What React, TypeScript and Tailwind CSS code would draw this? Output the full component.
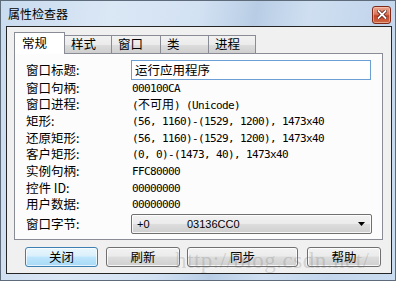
import React from "react";

const rows: { label: string; value: React.ReactNode; h: string }[] = [
  { label: "窗口句柄:", value: "000100CA", h: "h-[16px]" },
  {
    label: "窗口进程:",
    value: (
      <>
        (<span className="font-['Noto_Sans_CJK_SC',sans-serif] text-[12px] tracking-normal">不可用</span>) (Unicode)
      </>
    ),
    h: "h-[17px]",
  },
  { label: "矩形:", value: "(56, 1160)-(1529, 1200), 1473x40", h: "h-[17px]" },
  { label: "还原矩形:", value: "(56, 1160)-(1529, 1200), 1473x40", h: "h-[16px]" },
  { label: "客户矩形:", value: "(0, 0)-(1473, 40), 1473x40", h: "h-[17px]" },
  { label: "实例句柄:", value: "FFC80000", h: "h-[17px]" },
  { label: "控件 ID:", value: "00000000", h: "h-[16px]" },
  { label: "用户数据:", value: "00000000", h: "h-[17px]" },
];

const tabs = [
  { name: "样式", w: "w-[47px]" },
  { name: "窗口", w: "w-[49px]" },
  { name: "类", w: "w-[48px]" },
  { name: "进程", w: "w-[48px]" },
];

function CloseGlyph() {
  return (
    <svg width="10" height="9" viewBox="0 0 10 9">
      <path d="M1.5 1 L8.5 8 M8.5 1 L1.5 8" stroke="#5a1a10" strokeWidth="3.4" strokeLinecap="square" />
      <path d="M1.5 1 L8.5 8 M8.5 1 L1.5 8" stroke="#ffffff" strokeWidth="1.8" strokeLinecap="square" />
    </svg>
  );
}

function Button({ children, className, primary }: { children: React.ReactNode; className: string; primary?: boolean }) {
  return (
    <div
      className={
        "flex h-[20px] items-center justify-center rounded-[3px] border text-[12.5px] leading-none text-black " +
        (primary
          ? "border-[#3c7fb1] bg-[linear-gradient(to_bottom,#eaf6fd_0%,#d9f0fc_45%,#bee6fd_50%,#a7d9f5_100%)] shadow-[inset_0_0_0_1px_rgba(255,255,255,0.7)] "
          : "border-[#707070] bg-[linear-gradient(to_bottom,#f2f2f2_0%,#ebebeb_45%,#dddddd_50%,#cfcfcf_100%)] shadow-[inset_0_0_0_1px_rgba(255,255,255,0.8)] ") +
        className
      }
    >
      {children}
    </div>
  );
}

export default function App() {
  return (
    <div className="relative h-[281px] w-[396px] overflow-hidden font-['Noto_Sans_CJK_SC',sans-serif]">
      {/* Aero frame */}
      <div className="flex h-full w-full flex-col border border-[#5d6b7a] bg-[linear-gradient(100deg,#c9dbef_0%,#dae7f5_25%,#d3e2f3_45%,#b8cde5_58%,#cfdff1_70%,#c3d6ec_85%,#cadcef_100%)] pb-[6px] pl-[5px] pr-[3px]">
        <div className="flex h-[25px] shrink-0 items-center justify-between">
          <span className="pl-[2px] pt-[1px] text-[12px] leading-none text-black">属性检查器</span>
          <div className="mr-[1px] mt-[2px] flex h-[18px] w-[19px] items-center justify-center rounded-[3px] border border-[#7d2a1a] bg-[linear-gradient(to_bottom,#eba48f_0%,#d8785c_45%,#c44426_55%,#cf6a48_100%)] shadow-[inset_0_0_0_1px_rgba(255,220,200,0.5)]">
            <CloseGlyph />
          </div>
        </div>

        {/* Client area */}
        <div className="flex min-h-0 flex-1 flex-col border border-[#252525] bg-[#f0f0f0] pl-[7px] pr-[8px] pt-[5px]">
          {/* Tab strip */}
          <div className="flex h-[21px] shrink-0 items-end text-[12.5px] leading-none text-black">
            <div className="relative z-10 -mb-px flex h-[22px] w-[51px] items-center border-x border-t border-[#898c95] bg-white pl-[7px]">
              常规
            </div>
            {tabs.map((t, i) => (
              <div
                key={t.name}
                className={
                  "flex h-[18px] items-center border-l border-t border-[#898c95] bg-[linear-gradient(to_bottom,#f2f2f2_0%,#ebebeb_50%,#dddddd_51%,#cfcfcf_100%)] pl-[6px] " +
                  t.w +
                  (i === 0 ? " -ml-px" : "") +
                  (i === tabs.length - 1 ? " border-r" : "")
                }
              >
                {t.name}
              </div>
            ))}
          </div>

          {/* Tab panel */}
          <div className="flex h-[187px] shrink-0 flex-col border border-[#898c95] bg-[#fcfcfc] pl-[11px] pt-[6px] text-[12.5px] leading-none text-black">
            <div className="flex h-[20px] items-center">
              <span className="w-[105px]">窗口标题:</span>
              <div className="flex h-[20px] w-[240px] items-center border border-[#6c9fd3] bg-white pl-[3px] text-[12.5px]">
                运行应用程序
              </div>
            </div>
            {rows.map((r) => (
              <div key={r.label} className={"flex items-center " + r.h}>
                <span className="w-[105px]">{r.label}</span>
                <span className="pl-px font-['DejaVu_Sans_Mono','Noto_Sans_CJK_SC',monospace] text-[11px] tracking-[-0.62px] whitespace-pre">
                  {r.value}
                </span>
              </div>
            ))}
            <div className="mt-px flex h-[20px] items-center">
              <span className="w-[105px]">窗口字节:</span>
              <div className="relative flex h-[20px] w-[241px] items-center rounded-[2px] border border-[#707070] bg-[linear-gradient(to_bottom,#f2f2f2_0%,#ebebeb_50%,#dddddd_51%,#cfcfcf_100%)] font-['Liberation_Sans',sans-serif] text-[11px] shadow-[inset_0_0_0_1px_rgba(255,255,255,0.8)]">
                <span className="w-[55px] pl-[5px]">+0</span>
                <span>03136CC0</span>
                <svg className="absolute right-[6px] top-[7px]" width="7" height="4" viewBox="0 0 7 4">
                  <path d="M0 0 H7 L3.5 4 Z" fill="#000" />
                </svg>
              </div>
            </div>
          </div>

          {/* Buttons */}
          <div className="mt-[7px] flex pl-[11px]">
            <Button primary className="w-[73px]">关闭</Button>
            <Button className="ml-[8px] w-[74px]">刷新</Button>
            <Button className="ml-[7px] w-[111px]">同步</Button>
            <Button className="ml-[9px] w-[74px]">帮助</Button>
          </div>
        </div>
      </div>

      {/* Watermark */}
      <div className="pointer-events-none absolute left-[175px] top-[249px] font-['Liberation_Serif',serif] text-[23px] leading-none tracking-[0.5px] text-[rgba(110,110,110,0.24)]">
        http://blog.csdn.net/
      </div>
    </div>
  );
}
